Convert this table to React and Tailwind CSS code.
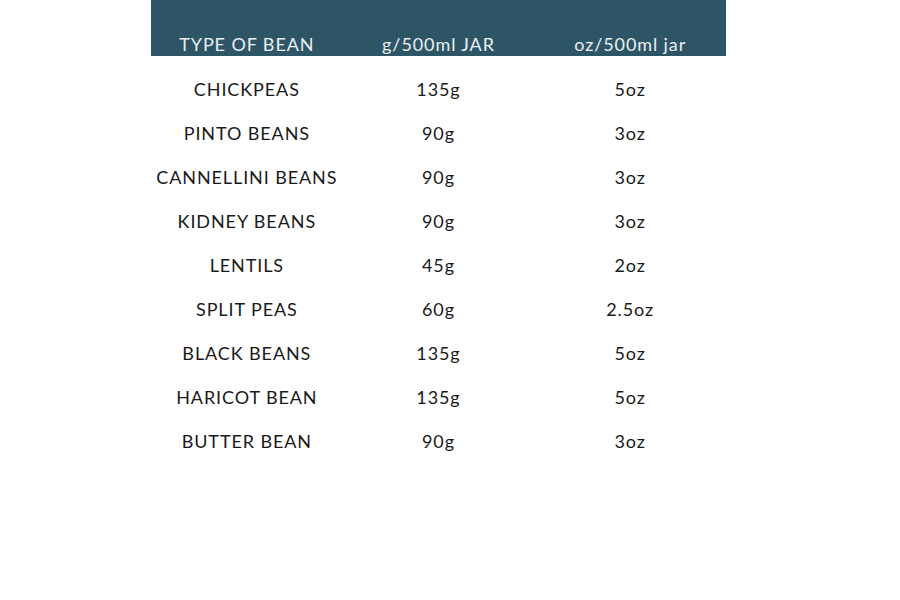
import React from "react";

const rows = [
  ["CHICKPEAS", "135g", "5oz"],
  ["PINTO BEANS", "90g", "3oz"],
  ["CANNELLINI BEANS", "90g", "3oz"],
  ["KIDNEY BEANS", "90g", "3oz"],
  ["LENTILS", "45g", "2oz"],
  ["SPLIT PEAS", "60g", "2.5oz"],
  ["BLACK BEANS", "135g", "5oz"],
  ["HARICOT BEAN", "135g", "5oz"],
  ["BUTTER BEAN", "90g", "3oz"],
];

export default function App() {
  return (
    <div
      className="w-[900px] h-[600px] bg-white"
      style={{ fontFamily: '"Lato", "Liberation Sans", sans-serif' }}
    >
      <div className="ml-[151px] w-[575px]">
        <div className="grid grid-cols-3 h-[56px] bg-[#2e5566] text-[#e8f0f2] text-[18px] tracking-[0.05em] items-end">
          <div className="text-center leading-[24px]">TYPE OF BEAN</div>
          <div className="text-center leading-[24px]">g/500ml JAR</div>
          <div className="text-center leading-[24px]">oz/500ml jar</div>
        </div>
        <div className="pt-[11px] text-[#1a1a1a] text-[18px] tracking-[0.05em]">
          {rows.map((r) => (
            <div key={r[0]} className="grid grid-cols-3 h-[44px] items-center">
              <div className="text-center">{r[0]}</div>
              <div className="text-center">{r[1]}</div>
              <div className="text-center">{r[2]}</div>
            </div>
          ))}
        </div>
      </div>
    </div>
  );
}
